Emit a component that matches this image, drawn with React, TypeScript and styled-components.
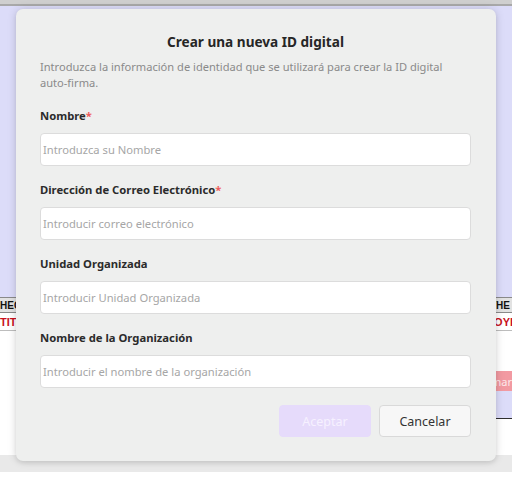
import styled, { createGlobalStyle } from "styled-components";

const GlobalStyle = createGlobalStyle`
  html, body {
    margin: 0;
    padding: 0;
    background: #ffffff;
  }
  body {
    font-family: "Noto Sans", "Open Sans", sans-serif;
    width: 512px;
    height: 485px;
    overflow: hidden;
  }
  * {
    box-sizing: border-box;
  }
`;

/* page behind the dialog */
const Page = styled.div`
  position: relative;
  width: 512px;
  height: 485px;
  display: flex;
  flex-direction: column;
  overflow: hidden;
`;

const TopBar = styled.div`
  height: 6px;
  background: #cfcfcf;
  border-bottom: 2px solid #a9a9a9;
  box-shadow: 0 1px 0 #f4f4f4;
`;

const Viewer = styled.div`
  height: 291px;
  background: #dcdcf9;
`;

const HeaderRow = styled.div`
  height: 16px;
  display: flex;
  justify-content: space-between;
  align-items: center;
  background: #e2e2e2;
  border-top: 1px solid #8a8a8a;
  border-bottom: 1px solid #8a8a8a;
  font-family: "Liberation Sans", Arial, sans-serif;
  font-weight: 700;
  font-size: 10px;
  color: #111;
  white-space: nowrap;
`;

const TitleRow = styled(HeaderRow)`
  height: 18px;
  background: #ffffff;
  border-top: none;
  border-bottom: 1px solid #bdbdbd;
  font-size: 11px;
  color: #c8101c;
`;

const Cell = styled.span<{ $width: number }>`
  width: ${(p) => p.$width}px;
  overflow: hidden;
`;

const Body = styled.div`
  height: 124px;
  display: flex;
  justify-content: flex-end;
  background: #ffffff;
`;

const SidePanel = styled.div`
  width: 220px;
  margin-top: 40px;
  height: 48px;
  display: flex;
  flex-direction: column;
  background: #dcdcf9;
  border-bottom: 1px solid #2f2f2f;
`;

const PinkButton = styled.div`
  height: 20px;
  background: #f29aa2;
  color: #fde8ea;
  font-size: 11px;
  display: flex;
  align-items: center;
  justify-content: flex-end;
  white-space: nowrap;
`;

const Footer = styled.div`
  height: 17px;
  background: #e9e9e9;
`;

/* dialog */
const Dialog = styled.div`
  position: absolute;
  top: 9px;
  left: 16px;
  width: 480px;
  height: 452px;
  background: #eeefee;
  border-radius: 7px;
  box-shadow: 0 0 10px rgba(0, 0, 0, 0.14), 0 2px 4px rgba(0, 0, 0, 0.08);
  padding: 23px 25px 24px 24px;
  display: flex;
  flex-direction: column;
`;

const Title = styled.h2`
  margin: 0;
  text-align: center;
  font-size: 13.6px;
  line-height: 20px;
  font-weight: 700;
  color: #262626;
`;

const Description = styled.p`
  margin: 7px 0 0;
  font-size: 11.1px;
  line-height: 16px;
  color: #8a8a8a;
`;

const Field = styled.div`
  margin-top: 16px;
  display: flex;
  flex-direction: column;
  gap: 9px;
  &:first-of-type {
    margin-top: 17px;
  }
`;

const Label = styled.label`
  font-size: 11.25px;
  line-height: 16px;
  font-weight: 700;
  color: #2b2b2b;
`;

const Star = styled.span`
  color: #ef5b5b;
`;

const Input = styled.input`
  height: 33px;
  width: 100%;
  border: 1px solid #dcdcdc;
  border-radius: 4px;
  background: #ffffff;
  padding: 0 2px;
  font-family: inherit;
  font-size: 11.2px;
  color: #333;
  outline: none;
  &::placeholder {
    color: #a6a6a6;
  }
`;

const Actions = styled.div`
  margin-top: 17px;
  display: flex;
  justify-content: flex-end;
  gap: 8px;
`;

const Button = styled.button<{ $primary?: boolean }>`
  width: 92px;
  height: 32px;
  border-radius: 4px;
  font-family: inherit;
  font-size: 12.5px;
  border: 1px solid ${(p) => (p.$primary ? "#e6dbfb" : "#d9d9d9")};
  background: ${(p) => (p.$primary ? "#e6dbfb" : "#f7f7f7")};
  color: ${(p) => (p.$primary ? "#f6f1ff" : "#333333")};
  cursor: ${(p) => (p.$primary ? "default" : "pointer")};
`;

const fields = [
  { label: "Nombre", required: true, placeholder: "Introduzca su Nombre" },
  {
    label: "Dirección de Correo Electrónico",
    required: true,
    placeholder: "Introducir correo electrónico",
  },
  { label: "Unidad Organizada", required: false, placeholder: "Introducir Unidad Organizada" },
  {
    label: "Nombre de la Organización",
    required: false,
    placeholder: "Introducir el nombre de la organización",
  },
];

export default function App() {
  return (
    <>
      <GlobalStyle />
      <Page>
        <TopBar />
        <Viewer />
        <HeaderRow>
          <Cell $width={40}>HECHO</Cell>
          <Cell $width={22}>THE F</Cell>
        </HeaderRow>
        <TitleRow>
          <Cell $width={40}>TITLE</Cell>
          <Cell $width={24}>JOYI</Cell>
        </TitleRow>
        <Body>
          <SidePanel>
            <PinkButton>Confirmar</PinkButton>
          </SidePanel>
        </Body>
        <Footer />

        <Dialog>
          <Title>Crear una nueva ID digital</Title>
          <Description>
            Introduzca la información de identidad que se utilizará para crear la ID digital
            auto-firma.
          </Description>
          {fields.map((f) => (
            <Field key={f.label}>
              <Label>
                {f.label}
                {f.required && <Star>*</Star>}
              </Label>
              <Input placeholder={f.placeholder} />
            </Field>
          ))}
          <Actions>
            <Button $primary disabled>
              Aceptar
            </Button>
            <Button>Cancelar</Button>
          </Actions>
        </Dialog>
      </Page>
    </>
  );
}
